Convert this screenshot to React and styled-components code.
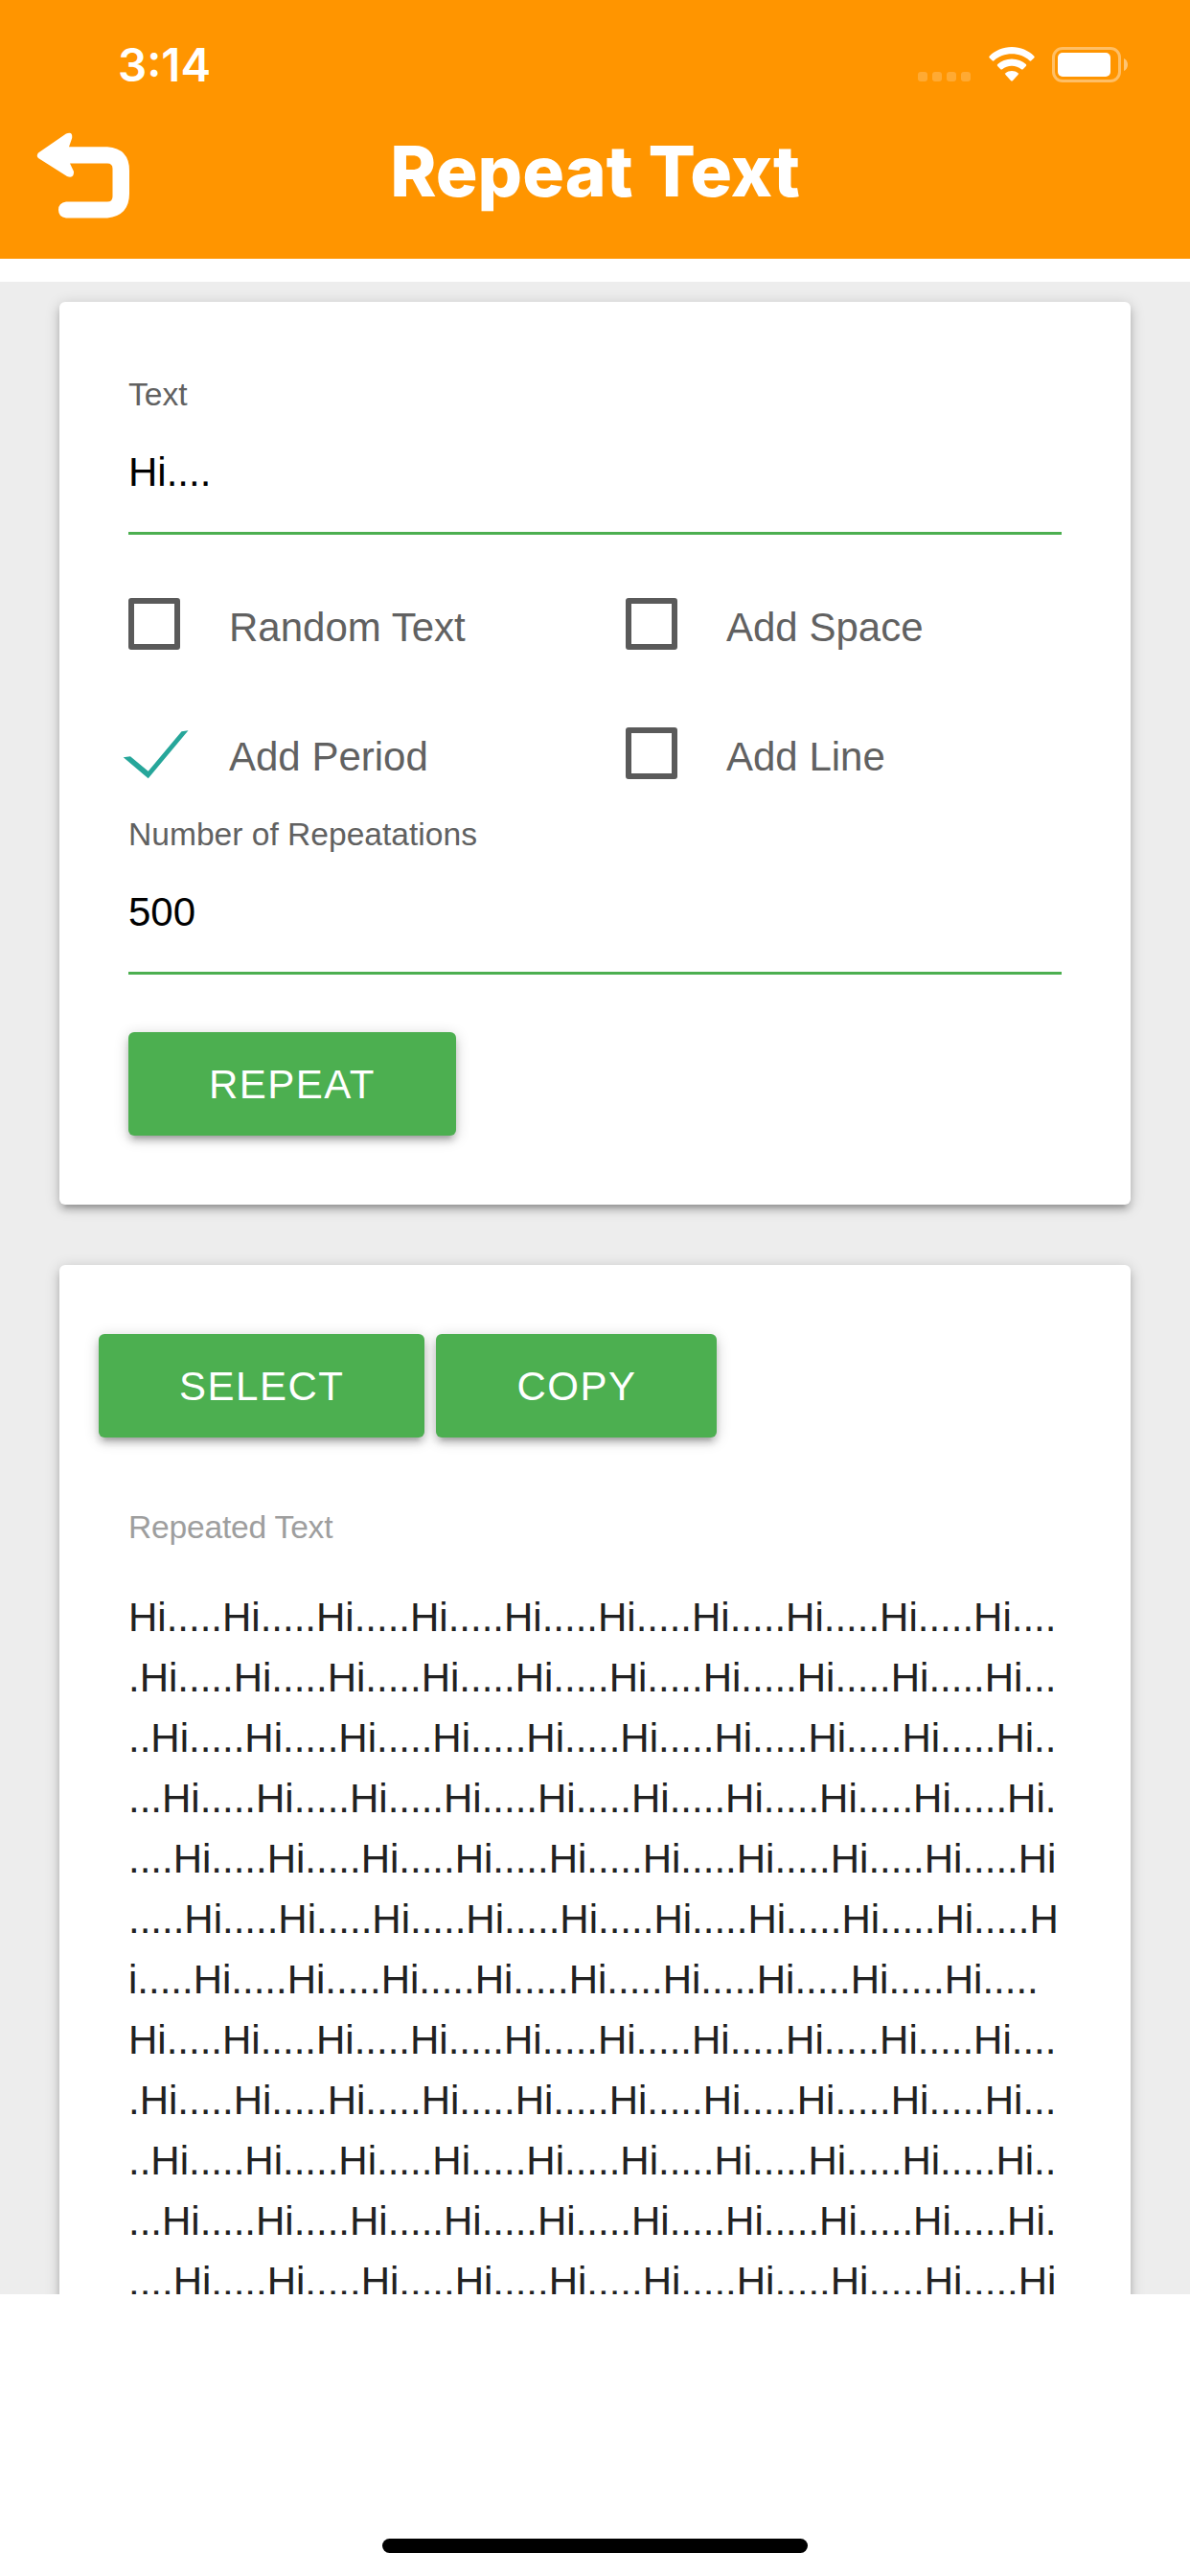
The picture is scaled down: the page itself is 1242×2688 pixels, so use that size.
import React from "react";
import styled, { createGlobalStyle, css } from "styled-components";

const GlobalStyle = createGlobalStyle`
  * { box-sizing: border-box; }
  html, body { margin: 0; padding: 0; background: #fff; }
  body { font-family: "Liberation Sans", Arial, sans-serif; }
`;

const raised = css`
  box-shadow: 0 6px 6px 0 rgba(0, 0, 0, 0.14), 0 9px 3px -6px rgba(0, 0, 0, 0.12),
    0 3px 15px 0 rgba(0, 0, 0, 0.2);
`;

const Screen = styled.div`
  width: 1242px;
  height: 2688px;
  display: flex;
  flex-direction: column;
  overflow: hidden;
  background: #fff;
`;

const Header = styled.header`
  height: 270px;
  flex: none;
  background: #ff9500;
  color: #fff;
  font-family: Inter, sans-serif;
`;

const StatusBar = styled.div`
  height: 132px;
  display: flex;
  justify-content: space-between;
  padding: 0 65px 0 123px;
`;

const Clock = styled.span`
  margin-top: 39px;
  font-size: 47.5px;
  line-height: 58px;
  font-weight: 600;
`;

const StatusIcons = styled.div`
  display: flex;
  align-items: flex-start;
  padding-top: 49px;
`;

const Signal = styled.div`
  display: flex;
  gap: 5px;
  margin: 26px 19px 0 0;
`;

const SignalDot = styled.i`
  width: 10px;
  height: 10px;
  border-radius: 3px;
  background: rgba(255, 255, 255, 0.2);
`;

const WifiIcon = styled.svg`
  width: 48px;
  height: 36px;
  margin-right: 18px;
`;

const BatteryIcon = styled.svg`
  width: 79px;
  height: 37px;
`;

const NavBar = styled.div`
  height: 138px;
  display: grid;
  grid-template-columns: 160px 1fr 160px;
`;

const BackButton = styled.button`
  width: 100px;
  height: 95px;
  margin: 4px 0 0 37px;
  padding: 0;
  border: 0;
  background: none;
`;

const Title = styled.h1`
  margin: 1px 0 0;
  font-size: 73px;
  line-height: 92px;
  font-weight: 800;
  text-align: center;
  white-space: nowrap;
`;

const Content = styled.main`
  height: 2100px;
  flex: none;
  margin-top: 24px;
  padding: 21px 62px 0;
  background: #ededed;
  overflow: hidden;
  display: flex;
  flex-direction: column;
  gap: 63px;
`;

const Card = styled.section`
  flex: none;
  height: ${(p) => p.$height}px;
  padding: 72px;
  border-radius: 6px;
  background: #fff;
  ${raised}
`;

const Field = styled.label`
  display: block;
  height: ${(p) => p.$height}px;
`;

const FieldLabel = styled.span`
  display: block;
  padding-top: 1px;
  font-size: 33.6px;
  line-height: 48px;
  letter-spacing: ${(p) => (p.$muted ? "-0.2px" : "normal")};
  color: ${(p) => (p.$muted ? "#9e9e9e" : "#616161")};
`;

const Input = styled.input`
  display: block;
  width: 100%;
  height: 122px;
  padding: 0 0 6px;
  border: 0;
  border-bottom: 3px solid #4caf50;
  outline: 0;
  background: none;
  color: #000;
  font: 42px "Liberation Sans", Arial, sans-serif;
`;

const Options = styled.div`
  display: grid;
  grid-template-columns: 519px 1fr;
  grid-auto-rows: 135px;
  height: 222px;
`;

const Option = styled.label`
  display: flex;
  align-items: flex-start;
  color: #616161;
  font-size: 42px;
  line-height: 61px;
`;

const Box = styled.span`
  width: 54px;
  height: 54px;
  margin-right: 51px;
  border: 6px solid #5a5a5a;
  border-radius: 3px;
`;

const Check = styled.svg`
  width: 72px;
  height: 54px;
  margin: 0 39px 0 -6px;
`;

const Button = styled.button`
  height: 108px;
  padding: 1px 84px 0;
  border: 0;
  border-radius: 6px;
  background: #4caf50;
  color: #fff;
  font: 42px/107px "Liberation Sans", Arial, sans-serif;
  letter-spacing: 1.5px;
  text-transform: uppercase;
  ${raised}
`;

const Actions = styled.div`
  display: flex;
  gap: 12px;
  margin: 0 0 69px -31px;
`;

const Output = styled.p`
  margin: 38px 0 0;
  color: #212121;
  font-size: 42px;
  line-height: 63px;
  line-break: anywhere;
`;

const HomeArea = styled.footer`
  flex: 1;
  display: flex;
  justify-content: center;
  align-items: flex-end;
  padding-bottom: 24px;
`;

const HomeIndicator = styled.span`
  width: 444px;
  height: 15px;
  border-radius: 8px;
  background: #000;
`;

const OPTIONS = [
  { label: "Random Text", checked: false },
  { label: "Add Space", checked: false },
  { label: "Add Period", checked: true },
  { label: "Add Line", checked: false },
];

const SOURCE = "Hi....";
const REPETITIONS = 500;
const VISIBLE_CHARS = 12 * 69;
const repeated = (SOURCE + ".").repeat(REPETITIONS).slice(0, VISIBLE_CHARS);

function CheckMark() {
  return (
    <Check viewBox="128 759 72 54">
      <path
        d="M128.700 790.200 136 789.200 154.700 804.800 189.500 763.200 196.500 762.300 154.700 812.200Z"
        fill="#26a69a"
      />
    </Check>
  );
}

export default function App() {
  return (
    <Screen>
      <GlobalStyle />
      <Header>
        <StatusBar>
          <Clock>3:14</Clock>
          <StatusIcons>
            <Signal>
              <SignalDot />
              <SignalDot />
              <SignalDot />
              <SignalDot />
            </Signal>
            <WifiIcon viewBox="0 0 48 36" fill="#fff">
              <path d="M24 0C33.300 0 41.300 3.600 47.200 9.400Q48.200 10.400 47.200 11.400L44.300 14.300Q43.400 15 42.500 14.200C37.500 9.700 31.200 7.300 24 7.300S10.500 9.700 5.500 14.200Q4.600 15 3.700 14.300L.8 11.400Q-.2 10.400 .8 9.400C6.700 3.600 14.700 0 24 0Z" />
              <path d="M24 12.500C29.900 12.500 35 14.600 38.800 18.100Q39.800 19.100 38.800 20.100L35.700 23.200Q34.800 24 33.900 23.200C31.200 20.900 27.900 19.700 24 19.700S16.800 20.900 14.100 23.200Q13.200 24 12.300 23.200L9.200 20.100Q8.200 19.100 9.200 18.100C13 14.600 18.100 12.500 24 12.500Z" />
              <path d="M24 25C26.600 25 28.700 25.800 30.400 27.200Q31.400 28.100 30.500 29.100L24.900 35.200Q24 36 23.100 35.200L17.500 29.100Q16.600 28.100 17.600 27.200C19.300 25.800 21.400 25 24 25Z" />
            </WifiIcon>
            <BatteryIcon viewBox="0 0 79 37">
              <rect x="1.500" y="1.500" width="69" height="34" rx="9.500" fill="none" stroke="#fff" strokeOpacity=".4" strokeWidth="3" />
              <rect x="6" y="6" width="55" height="25" rx="5" fill="#fff" />
              <path d="M75 12C77.500 13 79 15.700 79 18.500S77.500 24 75 25Z" fill="#fff" fillOpacity=".45" />
            </BatteryIcon>
          </StatusIcons>
        </StatusBar>
        <NavBar>
          <BackButton aria-label="Back">
            <svg width="100" height="95" viewBox="37 136 100 95" fill="#fff">
              <path d="M40 159.500 69 139.500Q76 136.500 75.200 144L72 153.300H112Q135 155 135 178V202Q135 225 112 227.500H69Q61 226.500 61 219T69 210.500H112Q117.500 210.500 117.500 205V176Q117.500 170.500 112 170.500H73L77 179Q77.500 186.500 70 184L40 165Q37.500 162.500 40 159.500Z" />
            </svg>
          </BackButton>
          <Title>Repeat Text</Title>
        </NavBar>
      </Header>
      <Content>
        <Card $height={942}>
          <Field $height={237}>
            <FieldLabel>Text</FieldLabel>
            <Input defaultValue={SOURCE} />
          </Field>
          <Options>
            {OPTIONS.map((o) => (
              <Option key={o.label}>
                {o.checked ? <CheckMark /> : <Box />}
                {o.label}
              </Option>
            ))}
          </Options>
          <Field $height={231}>
            <FieldLabel>Number of Repeatations</FieldLabel>
            <Input defaultValue={REPETITIONS} />
          </Field>
          <Button>Repeat</Button>
        </Card>
        <Card $height={1400}>
          <Actions>
            <Button>Select</Button>
            <Button>Copy</Button>
          </Actions>
          <FieldLabel $muted>Repeated Text</FieldLabel>
          <Output>{repeated}</Output>
        </Card>
      </Content>
      <HomeArea>
        <HomeIndicator />
      </HomeArea>
    </Screen>
  );
}
